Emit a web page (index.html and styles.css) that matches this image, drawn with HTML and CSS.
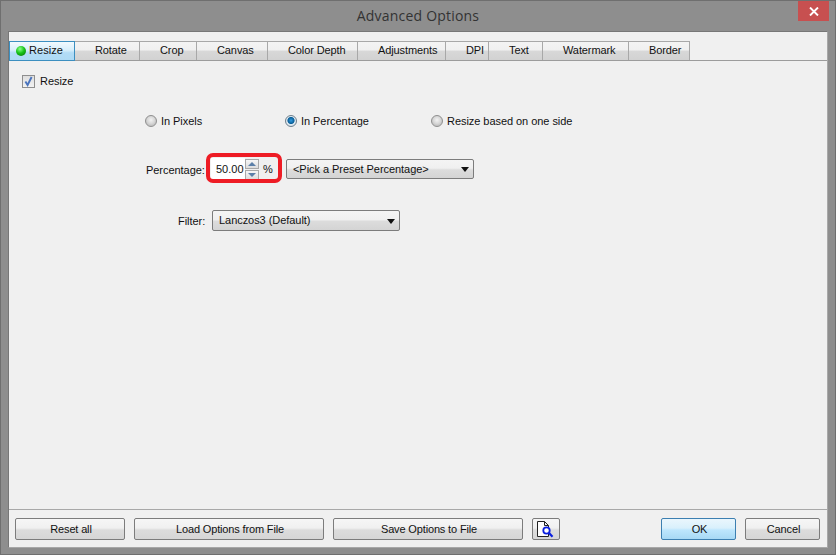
FILE: index.html
```html
<!DOCTYPE html>
<html>
<head>
<meta charset="utf-8">
<title>Advanced Options</title>
<link rel="stylesheet" href="styles.css">
</head>
<body>
<div class="window">
  <div class="titlebar">
    <span class="title">Advanced Options</span>
    <div class="close"><svg width="10" height="9" viewBox="0 0 10 9"><path d="M1 .5 L9 8.5 M9 .5 L1 8.5" stroke="#fff" stroke-width="1.9" fill="none"/></svg></div>
  </div>
  <div class="client">
    <div class="tabs">
      <div class="tab active t1"><span class="led"></span>Resize</div>
      <div class="tab t2">Rotate</div>
      <div class="tab t3">Crop</div>
      <div class="tab t4">Canvas</div>
      <div class="tab t5">Color Depth</div>
      <div class="tab t6">Adjustments</div>
      <div class="tab t7">DPI</div>
      <div class="tab t8">Text</div>
      <div class="tab t9">Watermark</div>
      <div class="tab t10">Border</div>
    </div>
    <div class="panel">
      <div class="row-check">
        <span class="checkbox"><svg width="11" height="11" viewBox="0 0 11 11"><path d="M2.4 5.6 L4.6 9 L8.6 1" stroke="#4a74bd" stroke-width="1.9" fill="none"/></svg></span>
        <span>Resize</span>
      </div>
      <div class="row-radios">
        <div class="radio-item r1"><span class="radio"></span>In Pixels</div>
        <div class="radio-item r2"><span class="radio on"></span>In Percentage</div>
        <div class="radio-item"><span class="radio"></span>Resize based on one side</div>
      </div>
      <div class="row-percent">
        <label class="lbl-percent">Percentage:</label>
        <div class="spin-group">
          <div class="ring"></div>
          <div class="input">50.00</div>
          <div class="spin">
            <div class="spin-btn"><svg width="8" height="4" viewBox="0 0 8 4"><path d="M0 4 L4 0 L8 4 Z" fill="#5b7fa8"/></svg></div>
            <div class="spin-btn"><svg width="8" height="4" viewBox="0 0 8 4"><path d="M0 0 L8 0 L4 4 Z" fill="#5b7fa8"/></svg></div>
          </div>
          <span class="unit">%</span>
        </div>
        <div class="combo c-preset"><span>&lt;Pick a Preset Percentage&gt;</span><i class="caret"></i></div>
      </div>
      <div class="row-filter">
        <label class="lbl-filter">Filter:</label>
        <div class="combo c-filter"><span>Lanczos3 (Default)</span><i class="caret"></i></div>
      </div>
    </div>
    <div class="footer">
      <div class="btn b-reset">Reset all</div>
      <div class="btn b-file">Load Options from File</div>
      <div class="btn b-file">Save Options to File</div>
      <div class="btn b-icon"><svg width="20" height="17" viewBox="0 0 20 17"><path d="M1.5 .5 H8.5 L12.5 4.5 V15.5 H1.5 Z M8.5 .5 V4.5 H12.5" fill="#fff" stroke="#222" stroke-width="1"/><circle cx="10.5" cy="9.5" r="3.2" fill="#fff" stroke="#0a1fe0" stroke-width="1.8"/><path d="M12.8 11.8 L16.5 15.8" stroke="#0a1fe0" stroke-width="2.2"/></svg></div>
      <div class="spacer"></div>
      <div class="btn b-ok">OK</div>
      <div class="btn b-cancel">Cancel</div>
    </div>
  </div>
</div>
</body>
</html>
```
FILE: styles.css
```css
* { box-sizing: border-box; }
html, body { margin: 0; padding: 0; }
body { width: 836px; height: 555px; overflow: hidden; font-family: "Liberation Sans", Arial, sans-serif; font-size: 11px; color: #111; letter-spacing: -0.05px; }
.window { width: 836px; height: 555px; background: #8e8e8e; border: 1px solid #6f6f6f; display: flex; flex-direction: column; padding: 0 7px 6px; position: relative; }
.titlebar { height: 30px; flex: none; display: flex; align-items: center; justify-content: center; padding-bottom: 2px; }
.title { font-family: "Open Sans", sans-serif; font-size: 14px; color: #333; letter-spacing: 0.2px; }
.close { position: absolute; top: 0; right: 6px; width: 31px; height: 20px; background: #c75050; display: flex; align-items: center; justify-content: center; }
.client { flex: 1; background: #f0f0f0; border: 1px solid #a0a0a0; border-color: #777 #a8a8a8 #a8a8a8 #777; display: flex; flex-direction: column; min-height: 0; }
.tabs { height: 29px; flex: none; padding: 9px 0 0 0; display: flex; border-bottom: 1px solid #9c9c9c; }
.tab { height: 19px; border: 1px solid #a8a8a8; border-bottom: 0; border-left-width: 0; background: linear-gradient(#f4f4f4 0, #f0f0f0 45%, #d8d8d8 50%, #d2d2d2 100%); display: flex; align-items: center; padding: 0 0 2px 20px; letter-spacing: -0.1px; }
.tab.active { height: 20px; border: 1px solid #3c8fc0; background: linear-gradient(#f2fafe 0, #d8effb 45%, #b2dcf6 60%, #aedaf5 100%); padding-left: 6px; letter-spacing: .05px; }
.led { width: 10px; height: 10px; border-radius: 50%; margin: 2px 3px 0 0; background: radial-gradient(circle at 40% 30%, #8dff8d 0, #18c418 45%, #066806 100%); }
.t1 { width: 66px; } .t2 { width: 65px; } .t3 { width: 57px; } .t4 { width: 71px; } .t5 { width: 90px; }
.t6 { width: 88px; } .t7 { width: 43px; } .t8 { width: 54px; } .t9 { width: 86px; } .t10 { width: 61px; }
.panel { flex: 1; min-height: 0; padding: 12px 0 0 13px; border-bottom: 1px solid #a8a8a8; }
.row-check { height: 16px; display: flex; align-items: center; gap: 5px; }
.checkbox { width: 13px; height: 13px; border: 1px solid #8e8e8e; background: linear-gradient(#dedede, #f2f2f2); display: flex; align-items: center; justify-content: center; }
.row-radios { margin: 24px 0 0 123px; height: 16px; display: flex; align-items: center; }
.radio-item { display: flex; align-items: center; gap: 4px; }
.r1 { width: 140px; } .r2 { width: 146px; }
.radio { width: 12px; height: 12px; border-radius: 50%; border: 1px solid #8f8f8f; background: radial-gradient(circle at 50% 40%, #f2f2f2 0, #d8d8d8 45%, #c4c4c4 70%, #eeeeee 100%); }
.radio.on { border-color: #6f7f8c; background: radial-gradient(circle at 50% 45%, #2f9ae0 0, #0a5f98 42%, #dfeaf2 54%, #cfdbe4 100%); }
.row-percent { margin: 30px 0 0 124px; height: 20px; display: flex; align-items: center; }
.lbl-percent { width: 65px; padding-top: 2px; }
.spin-group { position: relative; display: flex; align-items: center; width: 75px; height: 22px; }
.ring { position: absolute; left: -5px; top: -5px; width: 76px; height: 30px; border: 4px solid #ee1c25; border-radius: 7px; }
.input { width: 34px; height: 22px; background: #fff; display: flex; align-items: center; padding-left: 5px; font-size: 11px; letter-spacing: 0; }
.spin { width: 14px; display: flex; flex-direction: column; gap: 1px; }
.spin-btn { height: 10px; border: 1px solid #a8a8a8; background: linear-gradient(#f6f6f6, #dcdcdc); display: flex; align-items: center; justify-content: center; }
.unit { margin-left: 4px; font-size: 11px; }
.combo { height: 20px; border: 1px solid #7c7c7c; border-radius: 2px; background: linear-gradient(#f4f4f4 0, #f0f0f0 45%, #dcdcdc 55%, #d4d4d4 100%); display: flex; align-items: center; justify-content: space-between; padding: 0 4px 1px 6px; }
.c-preset { width: 188px; }
.caret { width: 0; height: 0; border-left: 4.5px solid transparent; border-right: 4.5px solid transparent; border-top: 5px solid #111; margin-top: 2px; }
.row-filter { margin: 31px 0 0 156px; height: 21px; display: flex; align-items: center; }
.lbl-filter { width: 34px; }
.c-filter { width: 188px; height: 21px; }
.footer { height: 37px; flex: none; padding: 8px 7px 0 6px; display: flex; gap: 9px; align-items: flex-start; }
.btn { height: 22px; border: 1px solid #7c7c7c; border-radius: 2px; background: linear-gradient(#f6f6f6 0, #f0f0f0 45%, #dcdcdc 55%, #d6d6d6 100%); display: flex; align-items: center; justify-content: center; padding-left: 2px; letter-spacing: -0.15px; }
.b-reset { width: 110px; } .b-file { width: 190px; } .b-icon { width: 28px; padding-left: 0; } .b-ok, .b-cancel { width: 75px; }
.b-ok { border-color: #3c7fb1; background: linear-gradient(#eaf6fd 0, #d9f0fc 45%, #bee6fd 55%, #a7d9f5 100%); }
.spacer { flex: 1; margin-right: -9px; }
```
